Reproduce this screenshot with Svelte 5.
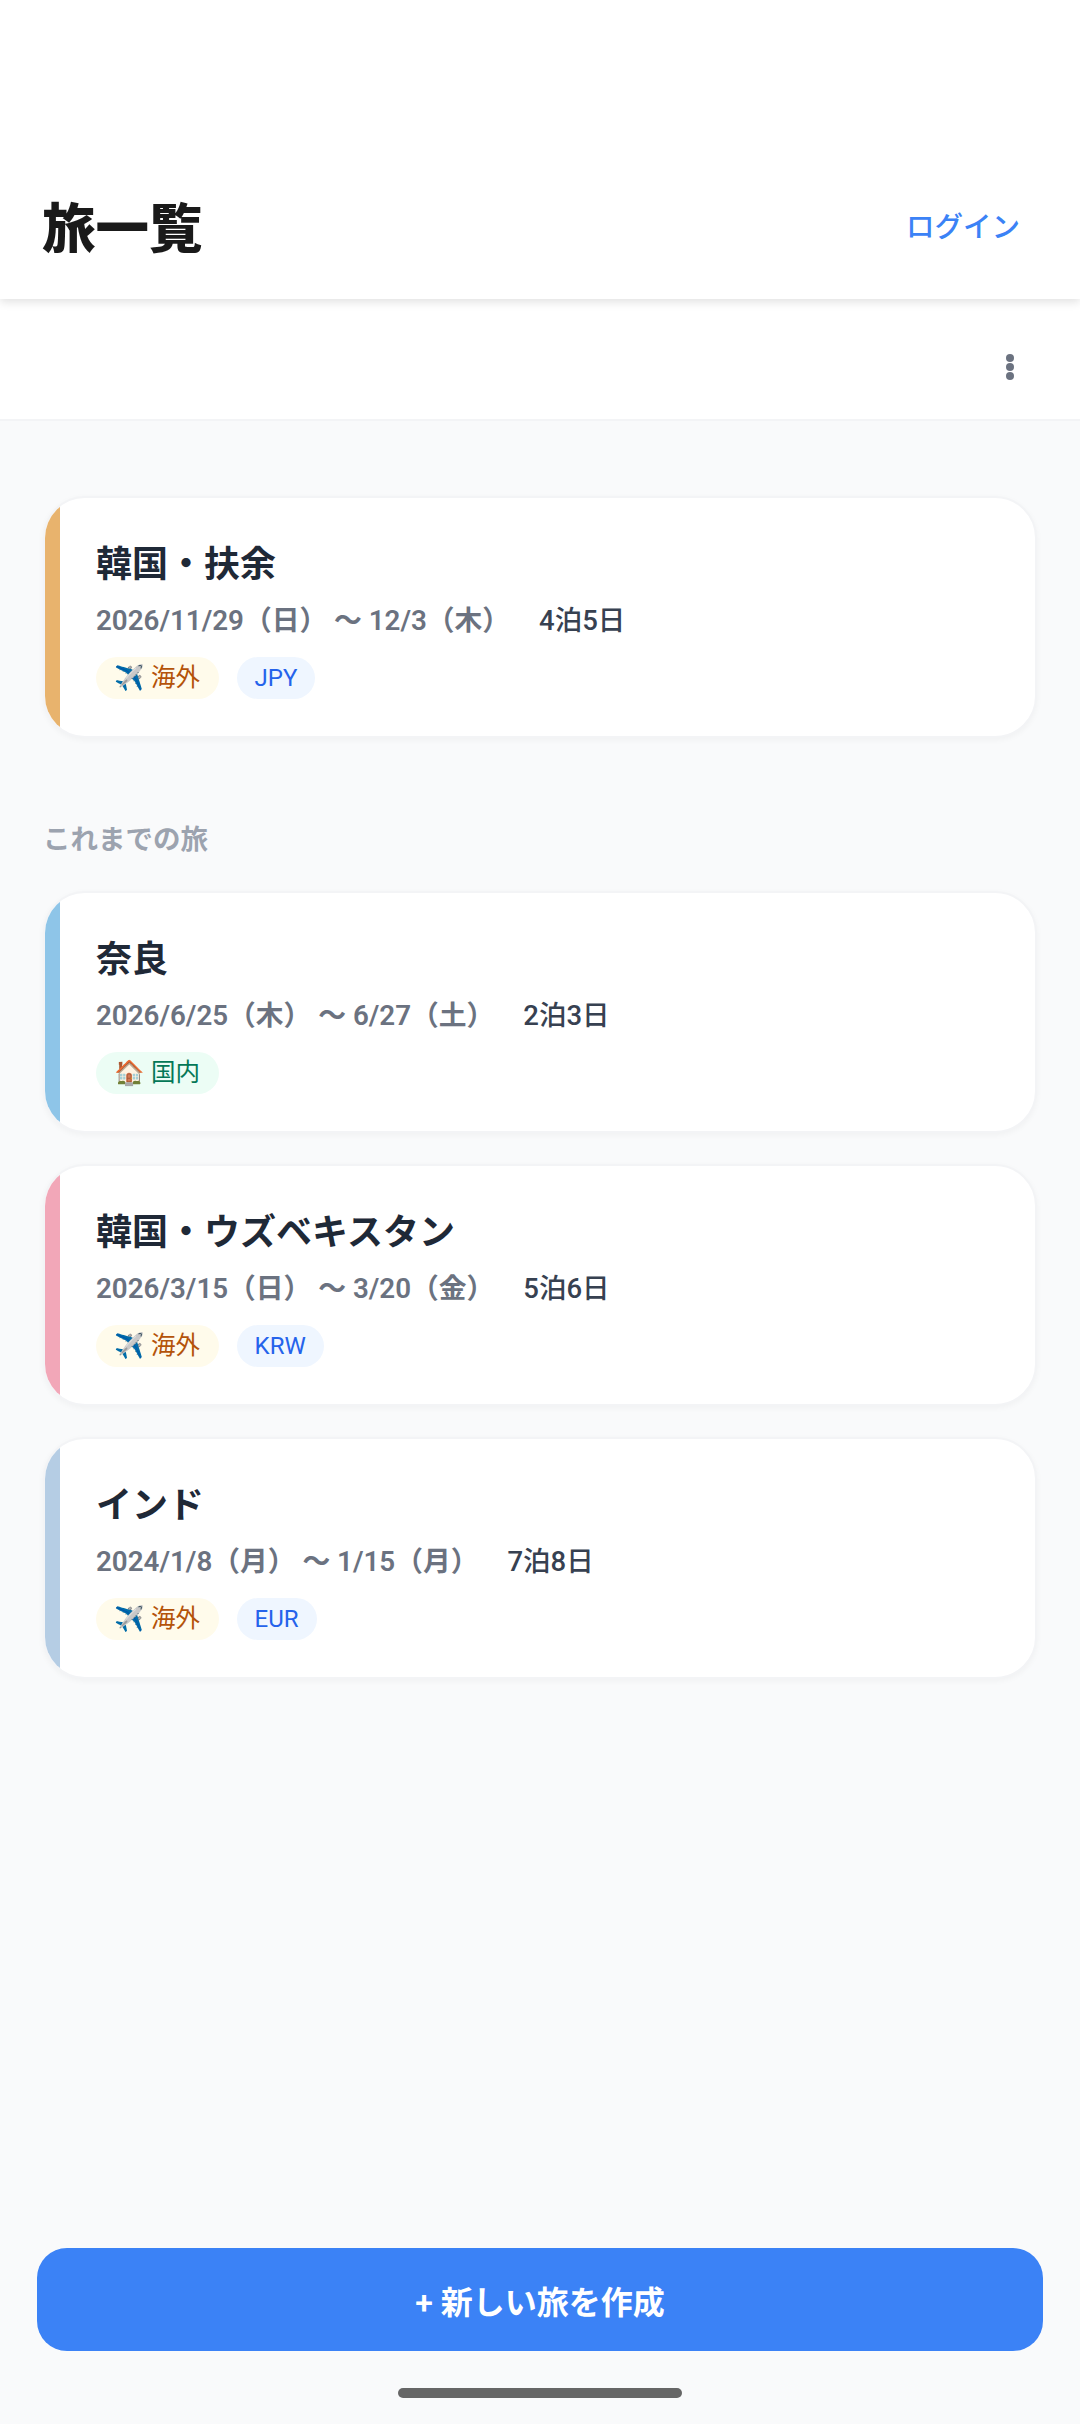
<script>
  const upcoming = [
    { title: '韓国・扶余', dates: '2026/11/29（日） 〜 12/3（木）', nights: '4泊5日', color: '#e8b36d', kind: 'abroad', currency: 'JPY' }
  ];
  const past = [
    { title: '奈良', dates: '2026/6/25（木） 〜 6/27（土）', nights: '2泊3日', color: '#8ec5e8', kind: 'home', currency: '' },
    { title: '韓国・ウズベキスタン', dates: '2026/3/15（日） 〜 3/20（金）', nights: '5泊6日', color: '#f2a7b8', kind: 'abroad', currency: 'KRW' },
    { title: 'インド', dates: '2024/1/8（月） 〜 1/15（月）', nights: '7泊8日', color: '#b5cde4', kind: 'abroad', currency: 'EUR' }
  ];
</script>

{#snippet card(t)}
  <article class="card">
    <div class="bar" style="background: {t.color}"></div>
    <div class="body">
      <h2>{t.title}</h2>
      <p class="when"><span class="dates">{t.dates}</span><span class="nights">{t.nights}</span></p>
      <div class="chips">
        {#if t.kind === 'abroad'}
          <span class="chip abroad">✈️ 海外</span>
        {:else}
          <span class="chip home">🏠 国内</span>
        {/if}
        {#if t.currency}<span class="chip cur">{t.currency}</span>{/if}
      </div>
    </div>
  </article>
{/snippet}

<div class="page">
  <header class="top">
    <h1>旅一覧</h1>
    <span class="login">ログイン</span>
  </header>
  <div class="tools">
    <svg class="more" width="10" height="26" viewBox="0 0 10 26" aria-hidden="true">
      <circle cx="5" cy="4" r="4" /><circle cx="5" cy="13" r="4" /><circle cx="5" cy="22" r="4" />
    </svg>
  </div>
  <main>
    <section class="list">
      {#each upcoming as t}{@render card(t)}{/each}
    </section>
    <h3>これまでの旅</h3>
    <section class="list">
      {#each past as t}{@render card(t)}{/each}
    </section>
  </main>
  <footer>
    <button>+ 新しい旅を作成</button>
    <div class="home-bar"></div>
  </footer>
</div>

<style>
  :global(body) {
    margin: 0;
    background: #f9fafb;
  }
  .page {
    width: 1080px;
    height: 2424px;
    display: flex;
    flex-direction: column;
    background: #f9fafb;
    font-family: Roboto, "Noto Sans CJK JP", "Noto Color Emoji", sans-serif;
    overflow: hidden;
  }
  .top {
    height: 299px;
    box-sizing: border-box;
    display: flex;
    align-items: flex-end;
    justify-content: space-between;
    padding: 0 60px 30px 42px;
    background: #fff;
    box-shadow: 0 3px 9px rgba(0, 0, 0, 0.12);
    position: relative;
    z-index: 1;
  }
  h1 {
    margin: 0;
    font-size: 53.5px;
    line-height: 78px;
    font-weight: 900;
    color: #1a1a1a;
  }
  .login {
    font-size: 28.5px;
    line-height: 78px;
    font-weight: 500;
    color: #3b82f6;
    padding-bottom: 2px;
  }
  .tools {
    height: 122px;
    box-sizing: border-box;
    display: flex;
    align-items: center;
    justify-content: flex-end;
    padding: 16px 65px 0 0;
    background: #fff;
    border-bottom: 2px solid #f3f4f6;
  }
  .more {
    fill: #6b7280;
  }
  main {
    flex: 1;
    padding: 75px 43px 0;
  }
  .list {
    display: flex;
    flex-direction: column;
    gap: 31px;
  }
  h3 {
    margin: 82px 0 31px;
    font-size: 27.5px;
    line-height: 40px;
    font-weight: 600;
    color: #9ca3af;
  }
  .card {
    height: 242px;
    box-sizing: border-box;
    display: flex;
    overflow: hidden;
    background: #fff;
    border: 2px solid #f3f4f6;
    border-radius: 42px;
    box-shadow: 0 2px 6px rgba(0, 0, 0, 0.04);
  }
  .bar {
    width: 15px;
    flex: none;
  }
  .body {
    flex: 1;
    padding: 42px 36px 0;
  }
  h2 {
    margin: 0;
    font-size: 36px;
    line-height: 50px;
    font-weight: 700;
    color: #1f2937;
  }
  .when {
    margin: 11px 0 0;
    line-height: 40px;
    display: flex;
    gap: 29px;
  }
  .dates {
    font-size: 27.75px;
    font-weight: 600;
    color: #6b7280;
  }
  .nights {
    font-size: 27.5px;
    font-weight: 500;
    color: #374151;
  }
  .chips {
    display: flex;
    gap: 18px;
    margin-top: 16px;
  }
  .chip {
    height: 42px;
    padding: 0 18.5px;
    border-radius: 21px;
    font-size: 24.5px;
    line-height: 42px;
  }
  .abroad {
    background: #fffbeb;
    color: #b45309;
  }
  .home {
    background: #ecfdf5;
    color: #047857;
  }
  .cur {
    padding: 0 18px;
    font-size: 24px;
    background: #eff6ff;
    color: #2563eb;
  }
  footer {
    display: flex;
    flex-direction: column;
    align-items: center;
    padding-bottom: 26px;
  }
  button {
    width: 1006px;
    height: 103px;
    border: 0;
    border-radius: 30px;
    background: #3b82f6;
    color: #fff;
    font: 600 32px Roboto, "Noto Sans CJK JP", sans-serif;
  }
  .home-bar {
    width: 284px;
    height: 10px;
    margin-top: 37px;
    border-radius: 5px;
    background: #666;
  }
</style>
